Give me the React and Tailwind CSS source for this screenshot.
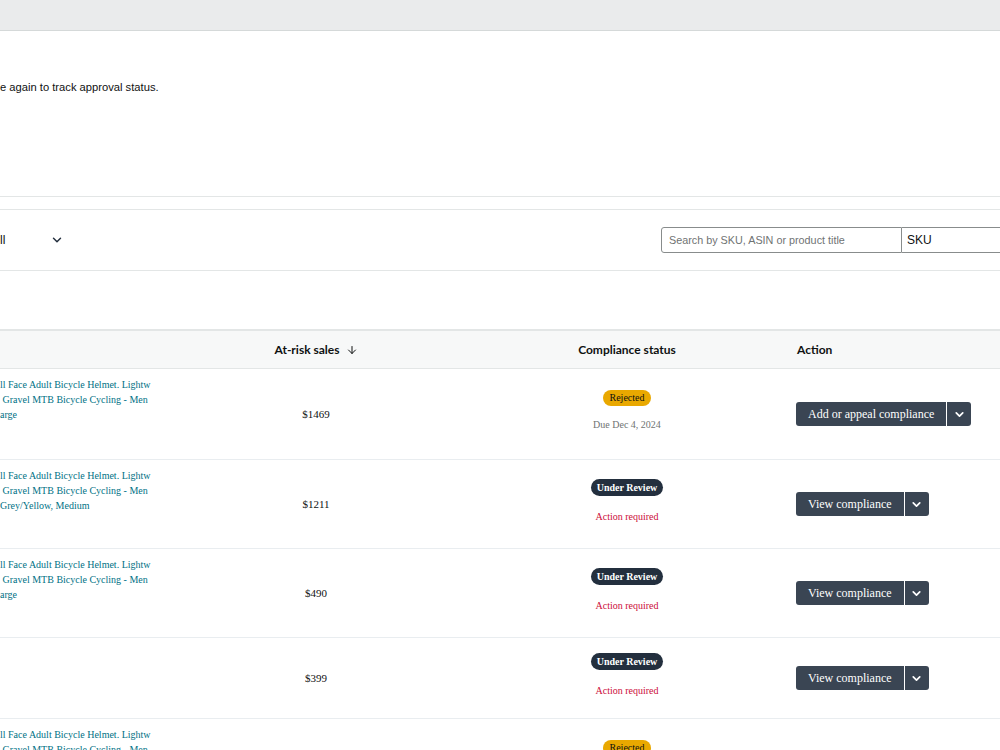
import { ChevronDown, ArrowDown } from 'lucide-react';

const rows = [
  {
    title: ['ll Face Adult Bicycle Helmet. Lightw', ' Gravel MTB Bicycle Cycling - Men', 'arge'],
    price: '$1469',
    status: 'rejected',
    note: 'Due Dec 4, 2024',
    action: 'Add or appeal compliance',
    h: 'h-[91px]',
  },
  {
    title: ['ll Face Adult Bicycle Helmet. Lightw', ' Gravel MTB Bicycle Cycling - Men', 'Grey/Yellow, Medium'],
    price: '$1211',
    status: 'review',
    note: 'Action required',
    action: 'View compliance',
    h: 'h-[89px]',
  },
  {
    title: ['ll Face Adult Bicycle Helmet. Lightw', ' Gravel MTB Bicycle Cycling - Men', 'arge'],
    price: '$490',
    status: 'review',
    note: 'Action required',
    action: 'View compliance',
    h: 'h-[89px]',
  },
  {
    title: [],
    price: '$399',
    status: 'review',
    note: 'Action required',
    action: 'View compliance',
    h: 'h-[81px]',
  },
  {
    title: ['ll Face Adult Bicycle Helmet. Lightw', ' Gravel MTB Bicycle Cycling - Men', 'arge'],
    price: '$1469',
    status: 'rejected',
    note: 'Due Dec 4, 2024',
    action: 'Add or appeal compliance',
    h: 'h-[90px]',
  },
];

function StatusCell({ status, note }) {
  return (
    <div className="flex flex-col items-center pb-[6px] font-['Liberation_Serif',serif] text-[10px]">
      {status === 'rejected' ? (
        <span className="rounded-full bg-[#e9a800] px-[7px] h-[16px] leading-[16px] text-[#0f1111]">Rejected</span>
      ) : (
        <span className="rounded-full bg-[#232f3e] px-[6px] h-[17px] leading-[17px] font-bold text-white">Under Review</span>
      )}
      <span className={status === 'rejected' ? 'mt-[11px] text-[#6f7373]' : 'mt-[13px] text-[#cc0c39]'}>{note}</span>
    </div>
  );
}

function SplitButton({ label }) {
  return (
    <div className="flex h-[24px] font-['Liberation_Serif',serif] text-[12px] text-white">
      <button className="rounded-l-[3px] bg-[#3a4553] px-[12px]">{label}</button>
      <button className="ml-px flex w-[24px] items-center justify-center rounded-r-[3px] bg-[#3a4553]">
        <ChevronDown size={13} strokeWidth={3.2} />
      </button>
    </div>
  );
}

export default function App() {
  return (
    <div className="h-[750px] w-[1000px] overflow-hidden bg-white font-['Liberation_Sans',Arial,sans-serif] text-[#0f1111]">
      {/* barra superior */}
      <div className="h-[31px] border-b border-[#d5d9d9] bg-[#eaebec]" />

      {/* aviso */}
      <div className="h-[166px] border-b border-[#e3e6e6] pt-[48px]">
        <p className="text-[11.2px] leading-[16px]">e again to track approval status.</p>
      </div>

      {/* filtros */}
      <div className="mt-[12px] flex h-[62px] items-center border-y border-[#e3e6e6]">
        <div className="flex w-[661px] shrink-0 items-center text-[12px]">
          <span className="w-[50px]">ll</span>
          <ChevronDown size={14} strokeWidth={2.5} className="text-[#232f3e]" />
        </div>
        <div className="flex h-[26px] shrink-0">
          <div className="flex w-[241px] items-center rounded-l-[3px] border border-[#888c8c] px-[7px] text-[10.8px] text-[#6f7373]">
            Search by SKU, ASIN or product title
          </div>
          <div className="flex w-[140px] items-center border-y border-r border-[#888c8c] px-[5px] text-[12px]">SKU</div>
        </div>
      </div>

      {/* tabla */}
      <div className="mt-[58px]">
        <div className="grid h-[40px] grid-cols-[166px_300px_322px_1fr] items-center border-t-2 border-b border-[#e3e6e6] bg-[#f7f8f8] font-['Lato',sans-serif] text-[12px] font-bold text-[#0f1111]">
          <div />
          <div className="flex items-center justify-center gap-[6px]">
            At-risk sales <ArrowDown size={12} strokeWidth={2} />
          </div>
          <div className="text-center">Compliance status</div>
          <div className="pl-[9px]">Action</div>
        </div>

        {rows.map((r, i) => (
          <div key={i} className={`grid ${r.h} grid-cols-[166px_300px_322px_1fr] border-b border-[#e9edf0]`}>
            <div className="pt-[8px] font-['Liberation_Serif',serif] text-[10px] leading-[15px] text-[#007185]">
              {r.title.map((t, j) => (
                <div key={j} className="whitespace-pre">{t}</div>
              ))}
            </div>
            <div className="flex items-center justify-center font-['Liberation_Serif',serif] text-[11px]">{r.price}</div>
            <div className="flex items-center justify-center">
              <StatusCell status={r.status} note={r.note} />
            </div>
            <div className="flex items-center pl-[8px]">
              <SplitButton label={r.action} />
            </div>
          </div>
        ))}
      </div>
    </div>
  );
}
